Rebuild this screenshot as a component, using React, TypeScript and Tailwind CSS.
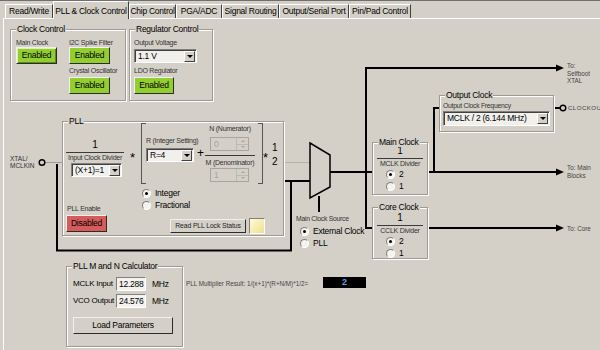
import React from "react";

const tabs = [
  { label: "Read/Write", w: "w-[48px]" },
  { label: "PLL & Clock Control", w: "w-[76px]", active: true },
  { label: "Chip Control", w: "w-[47px]" },
  { label: "PGA/ADC", w: "w-[46px]" },
  { label: "Signal Routing", w: "w-[57px]" },
  { label: "Output/Serial Port", w: "w-[70px]" },
  { label: "Pin/Pad Control", w: "w-[62px]" },
];

function Group({ title, className = "", children }: { title: string; className?: string; children?: React.ReactNode }) {
  return (
    <div className={`border border-[#9d9a93] shadow-[inset_1px_1px_0_#fff,1px_1px_0_#fff] ${className}`}>
      <span className="absolute left-[5px] top-[-6px] bg-[#d4d0c8] px-[1px] text-[8.5px] leading-[10px] text-black">
        {title}
      </span>
      {children}
    </div>
  );
}

function Btn({ children, className = "" }: { children: React.ReactNode; className?: string }) {
  return (
    <div
      className={`flex items-center justify-center border border-b-[#2b2b2b] border-l-[#f0f0f0] border-r-[#2b2b2b] border-t-[#f0f0f0] leading-none ${className}`}
    >
      {children}
    </div>
  );
}

function Select({ value, className = "" }: { value: string; className?: string }) {
  return (
    <div
      className={`flex items-center border border-b-white border-l-[#7f7f7f] border-r-white border-t-[#7f7f7f] bg-[#f1f0ed] shadow-[inset_1px_1px_0_#404040] ${className}`}
    >
      <span className="flex-1 pl-[3px] text-[8.5px] leading-none">{value}</span>
      <span className="mr-px flex h-[11px] w-[11px] items-center justify-center border border-b-[#404040] border-l-white border-r-[#404040] border-t-white bg-[#d4d0c8]">
        <span className="border-x-[3px] border-t-[3px] border-x-transparent border-t-black" />
      </span>
    </div>
  );
}

function Spin({ value, className = "" }: { value: string; className?: string }) {
  return (
    <div className={`flex h-[14px] w-[39px] border border-[#a8a5a0] bg-[#d4d0c8] ${className}`}>
      <span className="flex-1 pl-[3px] text-[8.5px] leading-[12px] text-[#a6a39d]">{value}</span>
      <span className="flex w-[12px] flex-col border-l border-[#bdbab3]">
        <span className="flex flex-1 items-center justify-center border-b border-[#bdbab3]">
          <span className="border-x-[2px] border-b-[2px] border-x-transparent border-b-[#a6a39d]" />
        </span>
        <span className="flex flex-1 items-center justify-center">
          <span className="border-x-[2px] border-t-[2px] border-x-transparent border-t-[#a6a39d]" />
        </span>
      </span>
    </div>
  );
}

function Radio({ label, checked = false, className = "" }: { label: string; checked?: boolean; className?: string }) {
  return (
    <div className={`flex items-center gap-[4px] ${className}`}>
      <span className="flex h-[9px] w-[9px] items-center justify-center rounded-full border border-b-white border-l-[#808080] border-r-white border-t-[#808080] bg-[#f4f3f0]">
        {checked && <span className="h-[3px] w-[3px] rounded-full bg-black" />}
      </span>
      <span className="text-[8.5px] leading-none">{label}</span>
    </div>
  );
}

function ClockBox({ title, divider, className, pad }: { title: string; divider: string; className: string; pad: string }) {
  return (
    <Group title={title} className={`absolute flex flex-col items-center bg-[#d4d0c8] ${pad} ${className}`}>
      <div className="text-[10px] leading-[10px]">1</div>
      <div className="mt-[2px] h-px w-[46px] bg-[#3a3a3a]" />
      <div className="text-[7px] leading-[9px] text-[#333]">{divider}</div>
      <Radio checked label="2" className="mt-[2px] self-start pl-[13px]" />
      <Radio label="1" className="mt-[3px] self-start pl-[13px]" />
    </Group>
  );
}

export default function App() {
  return (
    <div className="relative h-[350px] w-[600px] overflow-hidden whitespace-nowrap bg-[#d4d0c8] font-[family-name:Liberation_Sans,Arial,sans-serif] tracking-[-0.25px] text-black">
      <div className="h-px bg-[#6f6f6f]" />
      <div className="flex h-[17px] items-end pl-[5px]">
        {tabs.map((t) =>
          t.active ? (
            <div
              key={t.label}
              className={`relative z-10 -mb-px flex h-[18px] items-start justify-center border-l border-r border-t border-l-white border-r-[#404040] border-t-white bg-[#d4d0c8] pt-[4px] text-[8.5px] leading-[10px] ${t.w}`}
            >
              {t.label}
            </div>
          ) : (
            <div
              key={t.label}
              className={`flex h-[14px] items-center justify-center border-l border-r border-t border-l-white border-r-[#404040] border-t-white text-[8.5px] leading-none ${t.w}`}
            >
              {t.label}
            </div>
          )
        )}
      </div>

      <div className="ml-[3px] h-[332px] border-l border-t border-white">
        <div className="flex gap-[3px] pl-[6px] pt-[10px]">
          <Group title="Clock Control" className="relative flex h-[72px] w-[116px] gap-[12px] pl-[5px] pt-[8px]">
            <div className="flex flex-col">
              <span className="text-[7px] leading-[9px] text-[#333]">Main Clock</span>
              <Btn className="h-[17px] w-[41px] border-[#1c1c1c] bg-[#92cf2e] text-[8.5px] shadow-[inset_1px_1px_0_#d9f2ad,inset_-1px_-1px_0_#5d8a1c]">
                Enabled
              </Btn>
            </div>
            <div className="flex flex-col">
              <span className="text-[7px] leading-[9px] text-[#333]">I2C Spike Filter</span>
              <Btn className="h-[17px] w-[41px] bg-[#92cf2e] text-[8.5px]">Enabled</Btn>
              <span className="mt-[2px] text-[7px] leading-[9px] text-[#333]">Crystal Oscillator</span>
              <Btn className="mt-[2px] h-[17px] w-[41px] bg-[#92cf2e] text-[8.5px]">Enabled</Btn>
            </div>
          </Group>
          <Group title="Regulator Control" className="relative flex h-[72px] w-[84px] flex-col items-start pl-[4px] pt-[8px]">
            <span className="text-[7px] leading-[9px] text-[#333]">Output Voltage</span>
            <Select value="1.1 V" className="mt-[2px] h-[14px] w-[63px]" />
            <span className="mt-[3px] text-[7px] leading-[9px] text-[#333]">LDO Regulator</span>
            <Btn className="mt-[2px] h-[17px] w-[40px] bg-[#92cf2e] text-[8.5px]">Enabled</Btn>
          </Group>
        </div>
      </div>

      {/* wiring */}
      <svg className="absolute left-0 top-0" width="600" height="350" viewBox="0 0 600 350">
        <g stroke="#000" strokeWidth="2" fill="none">
          <path d="M366 68 H558" />
          <path d="M366 67 V228 H372" />
          <path d="M330 172 H372" />
          <path d="M428 172 H558" />
          <path d="M428 228 H558" />
          <path d="M434 172 V108 H439" />
          <path d="M553 108 H560" />
          <path d="M57 164 V250.5 H291 V181 H310" />
          <path d="M283 181 H291" />
          <path d="M319 196 V212" />
        </g>
        <path d="M45 162.5 H62" stroke="#9a9a9a" strokeWidth="1" />
        <path d="M283 162.5 H310" stroke="#b5b2ab" strokeWidth="1" />
        <polygon points="310,143 330,155 330,187 310,198" fill="#d4d0c8" stroke="#000" strokeWidth="1.5" />
        <g fill="#000">
          <polygon points="556,64.5 564,68 556,71.5" />
          <polygon points="556,168.5 564,172 556,175.5" />
          <polygon points="556,224.5 564,228 556,231.5" />
        </g>
        <circle cx="42" cy="162.5" r="2.8" fill="#d4d0c8" stroke="#000" strokeWidth="1.4" />
        <circle cx="563" cy="108" r="2.8" fill="#d4d0c8" stroke="#000" strokeWidth="1.4" />
      </svg>

      {/* labels on the canvas */}
      <div className="absolute left-[10px] top-[155px] text-[6.5px] leading-[7px] tracking-normal text-[#333]">
        XTAL/
        <br />
        MCLKIN
      </div>
      <div className="absolute left-[567px] top-[62px] text-[6.3px] leading-[7.5px] tracking-normal text-[#444]">
        To:
        <br />
        Selfboot
        <br />
        XTAL
      </div>
      <div className="absolute left-[568px] top-[104px] text-[6.2px] leading-[8px] tracking-[0.4px] text-[#444]">CLOCKOUT</div>
      <div className="absolute left-[567px] top-[164px] text-[6.3px] leading-[8px] tracking-normal text-[#444]">
        To: Main
        <br />
        Blocks
      </div>
      <div className="absolute left-[567px] top-[225px] text-[6.3px] leading-[8px] tracking-normal text-[#444]">To: Core</div>

      {/* PLL block */}
      <Group title="PLL" className="absolute left-[62px] top-[121px] h-[115px] w-[222px] bg-[#d4d0c8]">
        <div className="absolute left-[3px] top-[17px] w-[58px] text-center text-[10px] leading-[12px]">1</div>
        <div className="absolute left-[3px] top-[30px] h-px w-[58px] bg-[#3a3a3a]" />
        <div className="absolute left-[3px] top-[31px] w-[58px] text-center text-[7px] leading-[10px] text-[#333]">
          Input Clock Divider
        </div>
        <Select value="(X+1)=1" className="absolute left-[8px] top-[41px] h-[14px] w-[51px]" />
        <div className="absolute left-[67px] top-[29px] text-[13px] leading-none">*</div>
        <div className="absolute left-[78px] top-[1px] h-[61px] w-[5px] border-y border-l border-[#555]" />
        <div className="absolute left-[83px] top-[14px] text-[7px] leading-[10px] text-[#333]">R (Integer Setting)</div>
        <Select value="R=4" className="absolute left-[83px] top-[26px] h-[14px] w-[48px]" />
        <div className="absolute left-[134px] top-[25px] text-[12px] leading-none">+</div>
        <div className="absolute left-[142px] top-[2px] w-[50px] text-center text-[7px] leading-[10px] text-[#333]">
          N (Numerator)
        </div>
        <Spin value="0" className="absolute left-[147px] top-[15px]" />
        <div className="absolute left-[142px] top-[33px] h-px w-[50px] bg-[#3a3a3a]" />
        <div className="absolute left-[142px] top-[36px] w-[50px] text-center text-[7px] leading-[10px] text-[#333]">
          M (Denominator)
        </div>
        <Spin value="1" className="absolute left-[147px] top-[46px]" />
        <div className="absolute left-[195px] top-[1px] h-[61px] w-[5px] border-y border-r border-[#555]" />
        <div className="absolute left-[200px] top-[29px] text-[13px] leading-none">*</div>
        <div className="absolute left-[209px] top-[20px] text-[10px] leading-[12px]">1</div>
        <div className="absolute left-[209px] top-[34px] text-[10px] leading-[12px]">2</div>
        <Radio checked label="Integer" className="absolute left-[79px] top-[67px]" />
        <Radio label="Fractional" className="absolute left-[79px] top-[79px]" />
        <div className="absolute left-[4px] top-[82px] text-[7px] leading-[10px] text-[#333]">PLL Enable</div>
        <Btn className="absolute left-[3px] top-[93px] h-[17px] w-[41px] bg-[#d65b5b] text-[8.5px]">Disabled</Btn>
        <Btn className="absolute left-[107px] top-[97px] h-[14px] w-[76px] bg-[#d4d0c8] text-[6.8px] tracking-[-0.1px] text-[#222]">
          Read PLL Lock Status
        </Btn>
        <div className="absolute left-[186px] top-[96px] h-[16px] w-[16px] border border-b-white border-l-[#808080] border-r-white border-t-[#808080] bg-gradient-to-br from-[#fffbd6] to-[#efe08e]" />
      </Group>

      {/* mux source */}
      <div className="absolute left-[296px] top-[214px] text-[6.8px] leading-[9px] text-[#333]">Main Clock Source</div>
      <Radio checked label="External Clock" className="absolute left-[300px] top-[227px]" />
      <Radio label="PLL" className="absolute left-[300px] top-[239px]" />

      {/* clock dividers */}
      <ClockBox title="Main Clock" divider="MCLK Divider" pad="pt-[3px]" className="left-[372px] top-[142px] h-[53px] w-[56px]" />
      <ClockBox title="Core Clock" divider="CCLK Divider" pad="pt-[5px]" className="left-[372px] top-[207px] h-[52px] w-[56px]" />

      <Group title="Output Clock" className="absolute left-[439px] top-[95px] flex h-[37px] w-[115px] flex-col items-start bg-[#d4d0c8] pl-[3px] pt-[5px]">
        <span className="text-[6.8px] leading-[9px] text-[#333]">Output Clock Frequency</span>
        <Select value="MCLK / 2 (6.144 MHz)" className="mt-[1px] h-[15px] w-[107px]" />
      </Group>

      {/* calculator */}
      <Group title="PLL M and N Calculator" className="absolute left-[66px] top-[266px] flex h-[81px] w-[117px] flex-col items-start pl-[6px] pt-[10px]">
        <div className="flex items-center">
          <span className="w-[43px] text-[8px] leading-none">MCLK Input</span>
          <span className="flex h-[14px] w-[30px] items-center border border-b-white border-l-[#808080] border-r-white border-t-[#808080] bg-[#f3f2ef] pl-[2px] text-[8.5px] leading-none">
            12.288
          </span>
          <span className="ml-[6px] text-[8.5px] leading-none">MHz</span>
        </div>
        <div className="mt-[3px] flex items-center">
          <span className="w-[43px] text-[8px] leading-none">VCO Output</span>
          <span className="flex h-[14px] w-[30px] items-center border border-b-white border-l-[#808080] border-r-white border-t-[#808080] bg-[#f3f2ef] pl-[2px] text-[8.5px] leading-none">
            24.576
          </span>
          <span className="ml-[6px] text-[8.5px] leading-none">MHz</span>
        </div>
        <Btn className="mt-[9px] h-[17px] w-[100px] bg-[#d4d0c8] text-[8.5px]">Load Parameters</Btn>
      </Group>

      <div className="absolute left-[186px] top-[279px] text-[6.3px] leading-[9px] tracking-normal text-[#444]">
        PLL Multiplier Result: 1/(x+1)*(R+N/M)*1/2=
      </div>
      <div className="absolute left-[323px] top-[277px] flex h-[11px] w-[43px] items-center justify-center bg-black text-[9px] font-bold leading-none text-[#5aa5e6]">
        2
      </div>
    </div>
  );
}
